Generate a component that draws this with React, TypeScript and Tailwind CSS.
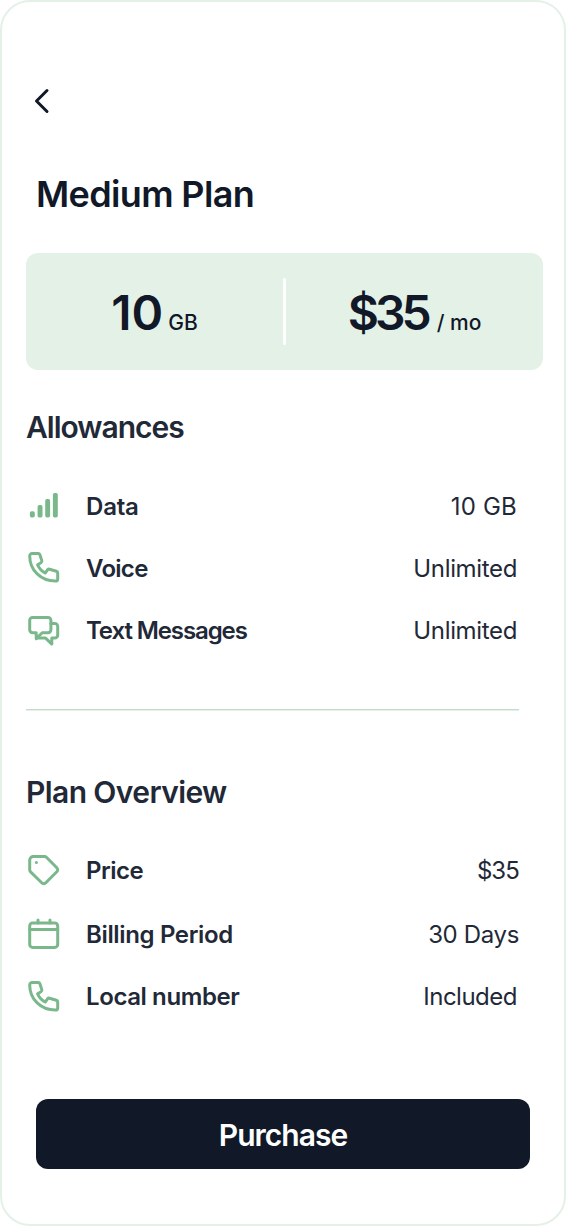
import clsx from 'clsx';
import type { ReactNode } from 'react';

interface PlanItem {
  label: string;
  value: string;
  icon: ReactNode;
  rowStyle: string;
  labelStyle: string;
  valueStyle: string;
}

interface SectionProps {
  items: PlanItem[];
}

const iconProps = {
  width: 32,
  height: 32,
  fill: 'none',
  stroke: 'currentColor',
  strokeWidth: 3,
  strokeLinecap: 'round',
  strokeLinejoin: 'round',
} as const;

const SignalIcon = () => (
  <svg width={32} height={32} viewBox="0 0 32 32" fill="currentColor">
    <rect x="1.9" y="21.3" width="4.9" height="6.2" rx="1.7" />
    <rect x="9.6" y="15" width="4.9" height="12.5" rx="1.7" />
    <rect x="17.2" y="9" width="4.9" height="18.5" rx="1.7" />
    <rect x="24.9" y="3" width="4.9" height="24.5" rx="1.7" />
  </svg>
);

const PhoneIcon = () => (
  <svg {...iconProps} viewBox="0 1 32 32">
    <path d="M4 2.6h6.2a1.8 1.8 0 0 1 1.7 1.2l1.9 5.8a1.8 1.8 0 0 1-.8 2.1l-3.4 2.1c1.6 3.5 4.2 6.4 7.6 8.2l2.4-3.2a1.8 1.8 0 0 1 1.9-.6l6.9 2a1.8 1.8 0 0 1 1.3 1.7v6a2.2 2.2 0 0 1-2.2 2.2C13.1 30.1 1.7 19.4 1.7 4.9A2.3 2.3 0 0 1 4 2.6z" />
  </svg>
);

const ChatIcon = () => (
  <svg {...iconProps} viewBox="0 0 32 32">
    <path d="M4.6 3.4H20a2.9 2.9 0 0 1 2.9 2.9v9.5a2.9 2.9 0 0 1-2.9 2.9h-5.8L8.2 24.6v-5.9H4.6a2.9 2.9 0 0 1-2.9-2.9V6.3a2.9 2.9 0 0 1 2.9-2.9z" />
    <path d="M22.9 9.4h3.9a2.9 2.9 0 0 1 2.9 2.9v8.9a2.9 2.9 0 0 1-2.9 2.9h-3v6l-6.2-6H8.9" />
  </svg>
);

const TagIcon = () => (
  <svg {...iconProps} viewBox="0 1 32 32">
    <path d="M5.5 2.4h10.8a3 3 0 0 1 2.1.9l10.4 10.4a2.9 2.9 0 0 1 0 4.1L17.8 28.8a2.9 2.9 0 0 1-4.1 0L2.6 17.9a3 3 0 0 1-.9-2.1V6.2a3.8 3.8 0 0 1 3.8-3.8z" />
    <circle cx="8.4" cy="8.5" r="1.5" fill="currentColor" stroke="none" />
  </svg>
);

const CalendarIcon = () => (
  <svg {...iconProps} viewBox="0 0 32 32">
    <rect x="1.7" y="5" width="28" height="24.4" rx="2.9" />
    <path d="M1.7 11.4h28M10 2v3M22 2v3" />
  </svg>
);

const allowances: PlanItem[] = [
  {
    label: 'Data',
    value: '10 GB',
    icon: <SignalIcon />,
    rowStyle: 'h-[62px]',
    labelStyle: 'pt-0.5 tracking-[-0.2px]',
    valueStyle: 'mr-0.5 pt-0.5 tracking-[0.2px]',
  },
  {
    label: 'Voice',
    value: 'Unlimited',
    icon: <PhoneIcon />,
    rowStyle: 'h-[62px]',
    labelStyle: 'pt-0.5 tracking-[-0.7px]',
    valueStyle: 'mr-0.5 pt-0.5 tracking-[-0.35px]',
  },
  {
    label: 'Text Messages',
    value: 'Unlimited',
    icon: <ChatIcon />,
    rowStyle: 'h-[62px]',
    labelStyle: 'pt-0.5 tracking-[-1.1px]',
    valueStyle: 'mr-0.5 pt-0.5 tracking-[-0.35px]',
  },
];

const overview: PlanItem[] = [
  {
    label: 'Price',
    value: '$35',
    icon: <TagIcon />,
    rowStyle: 'h-16',
    labelStyle: 'tracking-[-0.5px]',
    valueStyle: 'tracking-[-0.9px]',
  },
  {
    label: 'Billing Period',
    value: '30 Days',
    icon: <CalendarIcon />,
    rowStyle: 'h-[62px]',
    labelStyle: 'pt-0.5 tracking-[-0.35px]',
    valueStyle: 'pt-0.5 tracking-[-0.35px]',
  },
  {
    label: 'Local number',
    value: 'Included',
    icon: <PhoneIcon />,
    rowStyle: 'h-16',
    labelStyle: 'tracking-[-0.4px]',
    valueStyle: 'mr-0.5 tracking-[-0.5px]',
  },
];

const PlanItems = ({ items }: SectionProps) => (
  <ul className="w-[493px] text-2xl">
    {items.map((i) => (
      <li key={i.label} className={clsx('flex items-center', i.rowStyle)}>
        <span className="ml-0.5 mr-[26px] text-[#7ab88c]">{i.icon}</span>
        <span className={clsx('flex-1 font-[560]', i.labelStyle)}>{i.label}</span>
        <span className={i.valueStyle}>{i.value}</span>
      </li>
    ))}
  </ul>
);

const App = () => (
  <main className="flex h-[1226px] w-[566px] flex-col rounded-[30px] border-2 border-[#e4f1e7] bg-white pl-6 font-['Inter',sans-serif] text-[#1f2937]">
    <button className="mt-[83px] ml-1 flex size-8 items-center" aria-label="Back">
      <svg
        width={24}
        height={32}
        viewBox="0 0 24 32"
        fill="none"
        stroke="#111827"
        strokeWidth="3"
        strokeLinecap="round"
        strokeLinejoin="round"
      >
        <path d="M17 5.5 6.5 16 17 26.5" />
      </svg>
    </button>
    <h1 className="mt-[57px] ml-2.5 h-10 text-4xl leading-10 font-semibold tracking-[-0.65px] text-[#111827]">
      Medium Plan
    </h1>

    <div className="mt-[39px] flex h-[117px] w-[517px] items-center rounded-xl bg-[#e4f1e7] text-[#111827]">
      <p className="flex flex-1 items-baseline justify-center gap-[5px] pt-1">
        <span className="text-5xl font-semibold">10</span>
        <span className="text-[21px] font-medium">GB</span>
      </p>
      <div className="h-[67px] w-[3px] rounded-xs bg-white" />
      <p className="flex flex-1 items-baseline justify-center gap-[9px] pt-1">
        <span className="text-5xl font-semibold tracking-[-4px]">$35</span>
        <span className="text-[21px] font-medium">/ mo</span>
      </p>
    </div>

    <h2 className="mt-[37px] h-10 text-3xl leading-10 font-[560] tracking-[-1px]">Allowances</h2>
    <div className="mt-7">
      <PlanItems items={allowances} />
    </div>

    <div className="mt-12 h-0.5 w-[493px] border-b border-[#e4f1e7] bg-[#c3dccb]" />

    <h2 className="mt-[61px] h-10 text-3xl leading-10 font-[560] tracking-[-0.6px]">Plan Overview</h2>
    <div className="mt-[27px]">
      <PlanItems items={overview} />
    </div>

    <button className="mt-[70px] ml-2.5 h-[70px] w-[494px] rounded-xl bg-[#111827] pt-0.5 text-3xl font-[560] tracking-[-1px] text-white">
      Purchase
    </button>
  </main>
);

export default App;
